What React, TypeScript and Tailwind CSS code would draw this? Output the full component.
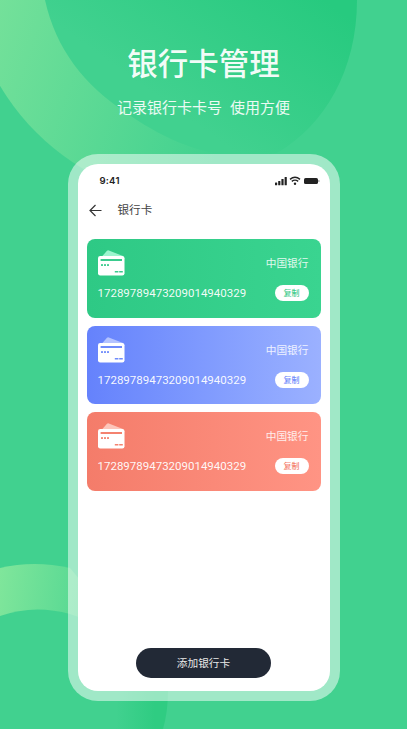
import React from "react";

const cjk = '"Noto Sans CJK SC", sans-serif';

function CardIcon({ flap, stripe }: { flap: string; stripe: string }) {
  return (
    <svg width="27" height="26" viewBox="0 0 27 26" className="shrink-0">
      <path d="M3.5 7 L9 0.7 Q9.8 0 10.8 0.4 L25 6 L25 8 L3.5 8 Z" fill={flap} />
      <rect x="0" y="6" width="26.5" height="19.5" rx="2.2" fill="#ffffff" />
      <rect x="2.6" y="9" width="21.4" height="2" fill={stripe} />
      <rect x="3" y="14" width="2" height="2" rx="0.4" fill={stripe} />
      <rect x="6" y="14" width="2" height="2" rx="0.4" fill={stripe} />
      <rect x="9" y="14" width="2" height="2" rx="0.4" fill={stripe} />
      <rect x="16.8" y="21" width="3.6" height="1.5" fill={stripe} />
      <rect x="21.2" y="21" width="3.6" height="1.5" fill={stripe} />
    </svg>
  );
}

function BankCard({ bg, flap, stripe, copy }: { bg: string; flap: string; stripe: string; copy: string }) {
  return (
    <div className={`h-[78.5px] rounded-[8px] pl-[11px] pr-[12px] pt-[11px] flex flex-col ${bg}`}>
      <div className="flex justify-between items-start h-[27px]">
        <CardIcon flap={flap} stripe={stripe} />
        <span className="text-[10.7px] leading-[16px] mt-[5px] text-white/85" style={{ fontFamily: cjk }}>中国银行</span>
      </div>
      <div className="flex justify-between items-center mt-[8px]">
        <span className="text-[11.5px] leading-[16px] font-normal text-white/95" style={{ fontFamily: "Roboto, sans-serif" }}>
          17289789473209014940329
        </span>
        <span
          className={`w-[34px] h-[16px] rounded-full bg-white flex items-center justify-center text-[8px] leading-none font-medium ${copy}`}
          style={{ fontFamily: cjk }}
        >
          复制
        </span>
      </div>
    </div>
  );
}

export default function App() {
  return (
    <div className="relative w-[407px] h-[729px] overflow-hidden bg-[#41d18f] flex flex-col items-center">
      <svg width="407" height="729" viewBox="0 0 407 729" className="absolute inset-0">
        <defs>
          <linearGradient id="ring" x1="0" y1="0" x2="1" y2="0.35">
            <stop offset="0" stopColor="#8ce89f" />
            <stop offset="0.75" stopColor="#41d18f" />
          </linearGradient>
          <linearGradient id="inner" x1="1" y1="0.15" x2="0" y2="0.85">
            <stop offset="0" stopColor="#27ca7f" />
            <stop offset="0.65" stopColor="#41d18f" />
          </linearGradient>
          <linearGradient id="low" x1="0" y1="0" x2="1" y2="0.1">
            <stop offset="0" stopColor="#80e69b" />
            <stop offset="1" stopColor="#41d18f" />
          </linearGradient>
          <linearGradient id="lowin" x1="0" y1="0" x2="1" y2="0">
            <stop offset="0" stopColor="#41d18f" />
            <stop offset="0.75" stopColor="#2fcc82" />
            <stop offset="1" stopColor="#2fcc82" />
          </linearGradient>
        </defs>
        <circle cx="204" cy="-35" r="237" fill="url(#ring)" />
        <path d="M45 0 C56 50 85 85 125 112 C165 140 215 165 277 153 C325 125 357 70 357 0 Z" fill="url(#inner)" />
        <path d="M0 568 Q34 560 70 568 L130 640 L0 660 Z" fill="url(#low)" />
        <path d="M0 616 Q34 604 70 614 C125 632 165 670 167 703 L163 729 L0 729 Z" fill="#41d18f" />
        <path d="M118 690 L168 690 Q168 712 163 729 L116 729 Z" fill="url(#lowin)" />
      </svg>

      <h1 className="relative mt-[40px] text-[30.5px] leading-[44px] font-medium text-white/95" style={{ fontFamily: cjk }}>
        银行卡管理
      </h1>
      <p className="relative mt-[13px] text-[15px] leading-[20px] text-white/90 [word-spacing:4.7px]" style={{ fontFamily: cjk }}>
        记录银行卡卡号 使用方便
      </p>

      <div className="relative mt-[37px] w-[272px] h-[547px] rounded-[30px] bg-white/50 p-[10px]">
        <div className="h-full rounded-[20px] bg-white flex flex-col">
          <div className="flex justify-between items-center pl-[22px] pr-[10px] pt-[6px] h-[22px] box-content">
            <span className="text-[9.6px] font-semibold text-[#222] tracking-[0.2px]" style={{ fontFamily: "Inter, sans-serif" }}>9:41</span>
            <svg width="45" height="10" viewBox="0 0 45 10">
              <rect x="0" y="6.5" width="2.2" height="2.7" rx="0.5" fill="#222" />
              <rect x="3.2" y="5" width="2.2" height="4.2" rx="0.5" fill="#222" />
              <rect x="6.4" y="3" width="2.2" height="6.2" rx="0.5" fill="#222" />
              <rect x="9.6" y="1" width="2.2" height="8.2" rx="0.5" fill="#222" />
              <path d="M15 3.4 Q20 -0.8 25 3.4 M16.8 5.4 Q20 2.8 23.2 5.4" stroke="#222" strokeWidth="1.4" fill="none" />
              <circle cx="20" cy="7.8" r="1.2" fill="#222" />
              <rect x="29" y="2" width="14" height="6" rx="1.6" fill="#222" />
              <rect x="43.4" y="4" width="1" height="2" rx="0.5" fill="#888" />
            </svg>
          </div>
          <div className="flex items-center pl-[11px] mt-[6px] h-[24px]">
            <svg width="13" height="13" viewBox="0 0 13 13" fill="none" stroke="#333" strokeWidth="1.2">
              <path d="M12.5 6.5 H1 M6.5 1 L1 6.5 L6.5 12" />
            </svg>
            <span className="ml-[16px] text-[11.6px] text-[#444]" style={{ fontFamily: cjk }}>银行卡</span>
          </div>
          <div className="mt-[17px] px-[9px] flex flex-col gap-[8px]">
            <BankCard bg="bg-gradient-to-r from-[#2ec985] to-[#3ad490]" flap="#9cf5cf" stripe="#3acb8e" copy="text-[#3fcb8c]" />
            <BankCard bg="bg-gradient-to-r from-[#6582fc] to-[#9bb1ff]" flap="#b4c3ff" stripe="#6f8bfb" copy="text-[#6f8bfb]" />
            <BankCard bg="bg-gradient-to-r from-[#f47c6a] to-[#ff9484]" flap="#fdc6bb" stripe="#f4826f" copy="text-[#f4826f]" />
          </div>
          <div className="mt-auto mb-[13px] flex justify-center">
            <button className="w-[135px] h-[30px] rounded-full bg-[#222936] text-[10.7px] text-[#e8e8e8]" style={{ fontFamily: cjk }}>
              添加银行卡
            </button>
          </div>
        </div>
      </div>
    </div>
  );
}
